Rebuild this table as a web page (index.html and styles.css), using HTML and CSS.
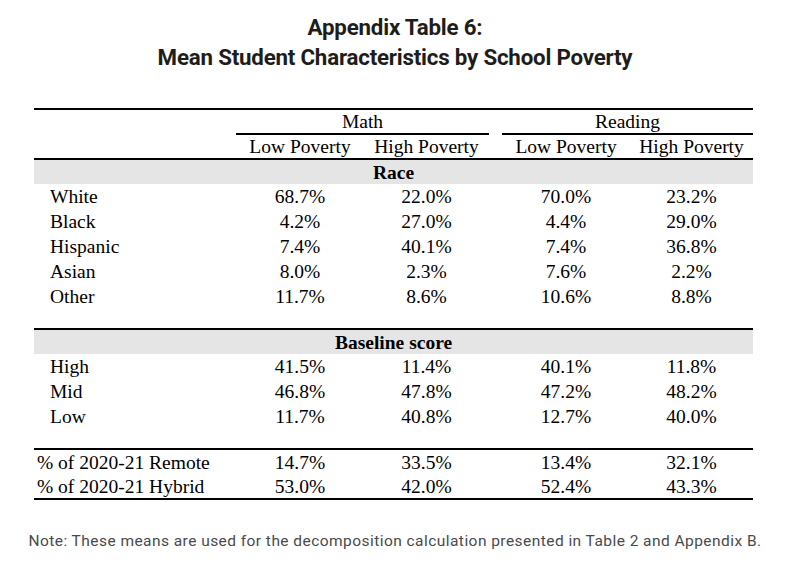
FILE: index.html
```html
<!DOCTYPE html>
<html>
<head>
<meta charset="utf-8">
<link rel="stylesheet" href="styles.css">
</head>
<body>
<div class="page">
  <h1 class="title">Appendix Table 6:<br>Mean Student Characteristics by School Poverty</h1>
  <table class="tbl">
    <colgroup>
      <col class="c-label"><col class="c-v1"><col class="c-v2"><col class="c-gap"><col class="c-v3"><col class="c-v4">
    </colgroup>
    <tr class="r-top">
      <td></td>
      <td colspan="2" class="grp">Math</td>
      <td></td>
      <td colspan="2" class="grp">Reading</td>
    </tr>
    <tr class="r-sub">
      <td></td>
      <td>Low Poverty</td>
      <td>High Poverty</td>
      <td></td>
      <td>Low Poverty</td>
      <td>High Poverty</td>
    </tr>
    <tr class="r-sec"><td colspan="6">Race</td></tr>
    <tr class="r-data"><td class="lbl">White</td><td>68.7%</td><td>22.0%</td><td></td><td>70.0%</td><td>23.2%</td></tr>
    <tr class="r-data"><td class="lbl">Black</td><td>4.2%</td><td>27.0%</td><td></td><td>4.4%</td><td>29.0%</td></tr>
    <tr class="r-data"><td class="lbl">Hispanic</td><td>7.4%</td><td>40.1%</td><td></td><td>7.4%</td><td>36.8%</td></tr>
    <tr class="r-data"><td class="lbl">Asian</td><td>8.0%</td><td>2.3%</td><td></td><td>7.6%</td><td>2.2%</td></tr>
    <tr class="r-data"><td class="lbl">Other</td><td>11.7%</td><td>8.6%</td><td></td><td>10.6%</td><td>8.8%</td></tr>
    <tr class="r-space"><td colspan="6"></td></tr>
    <tr class="r-sec r-ruled"><td colspan="6">Baseline score</td></tr>
    <tr class="r-data"><td class="lbl">High</td><td>41.5%</td><td>11.4%</td><td></td><td>40.1%</td><td>11.8%</td></tr>
    <tr class="r-data"><td class="lbl">Mid</td><td>46.8%</td><td>47.8%</td><td></td><td>47.2%</td><td>48.2%</td></tr>
    <tr class="r-data"><td class="lbl">Low</td><td>11.7%</td><td>40.8%</td><td></td><td>12.7%</td><td>40.0%</td></tr>
    <tr class="r-space"><td colspan="6"></td></tr>
    <tr class="r-data r-ruled r-first"><td class="lbl2">% of 2020-21 Remote</td><td>14.7%</td><td>33.5%</td><td></td><td>13.4%</td><td>32.1%</td></tr>
    <tr class="r-data r-last"><td class="lbl2">% of 2020-21 Hybrid</td><td>53.0%</td><td>42.0%</td><td></td><td>52.4%</td><td>43.3%</td></tr>
  </table>
  <p class="note">Note: These means are used for the decomposition calculation presented in Table 2 and Appendix B.</p>
</div>
</body>
</html>
```

FILE: styles.css
```css
html, body {
  margin: 0;
  padding: 0;
  background: #ffffff;
}
.page {
  width: 790px;
  height: 565px;
  position: relative;
}
.title {
  margin: 0;
  padding-top: 12px;
  font-family: Roboto, "Liberation Sans", sans-serif;
  font-weight: 700;
  font-size: 22.3px;
  line-height: 30px;
  text-align: center;
  color: #1d1d1b;
  letter-spacing: -0.2px;
}
.tbl {
  margin-top: 36px;
  margin-left: 34px;
  width: 719px;
  table-layout: fixed;
  border-collapse: separate;
  border-spacing: 0;
  font-family: "Liberation Serif", "Times New Roman", serif;
  font-size: 19.5px;
  color: #000;
}
.c-label { width: 202px; }
.c-v1 { width: 128px; }
.c-v2 { width: 125px; }
.c-gap { width: 13px; }
.c-v3 { width: 128px; }
.c-v4 { width: 123px; }
.tbl td {
  padding: 1px 0 0 0;
  text-align: center;
  white-space: nowrap;
  line-height: 22px;
}
.r-top td {
  border-top: 2px solid #000;
  height: 21px;
  vertical-align: bottom;
}
.r-top td.grp {
  border-bottom: 2px solid #000;
}
.r-sub td {
  height: 22px;
  border-bottom: 2px solid #000;
  vertical-align: middle;
}
.r-sec td {
  height: 23px;
  background: #e5e5e5;
  font-weight: 700;
  text-align: center;
}
.r-ruled td {
  border-top: 2px solid #000;
}
.r-data td {
  height: 24px;
}
.r-first td {
  height: 23px;
}
.r-last td {
  border-bottom: 2px solid #000;
  height: 23px;
}
.r-space td {
  height: 18px;
}
.tbl td.lbl {
  text-align: left;
  padding-left: 16px;
}
.tbl td.lbl2 {
  text-align: left;
  padding-left: 3px;
}
.note {
  margin: 32px 0 0 0;
  font-family: Roboto, "Liberation Sans", sans-serif;
  font-weight: 400;
  font-size: 15.5px;
  letter-spacing: 0.45px;
  color: #4a4a4a;
  text-align: center;
}
```
